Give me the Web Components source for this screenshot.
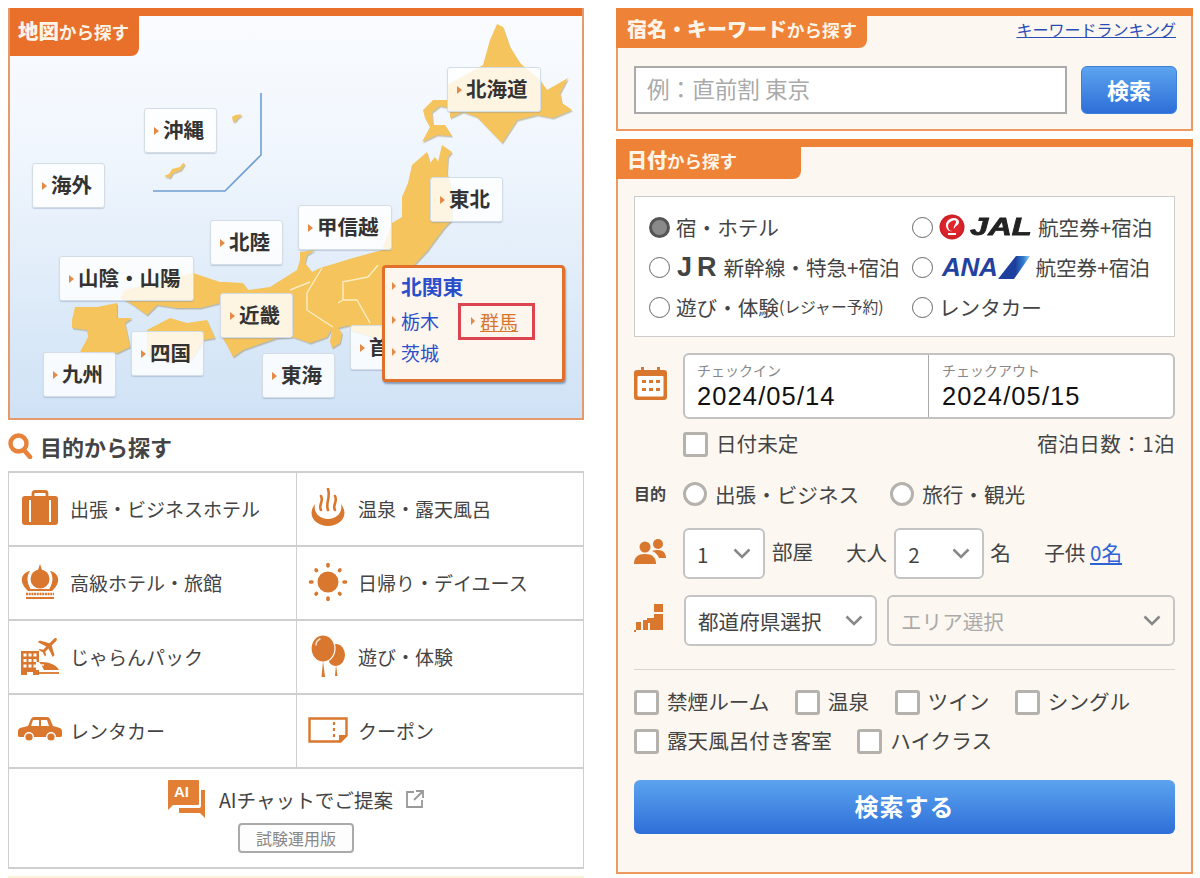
<!DOCTYPE html>
<html lang="ja"><head><meta charset="utf-8"><title>検索</title>
<style>
html,body{margin:0;padding:0;background:#fff;height:878px;overflow:hidden}
body{font-family:"Noto Sans CJK JP","Noto Sans",sans-serif;color:#444}
x-page{display:flex;gap:32px;padding:8px 7px 0 8px;align-items:flex-start}
svg{display:block}
</style></head><body>
<x-page>
  <x-left>
    <x-map>
      <x-map-label x="447" y="67">北海道</x-map-label>
      <x-map-label x="144" y="108">沖縄</x-map-label>
      <x-map-label x="32" y="163">海外</x-map-label>
      <x-map-label x="430" y="177">東北</x-map-label>
      <x-map-label x="298" y="205">甲信越</x-map-label>
      <x-map-label x="210" y="220">北陸</x-map-label>
      <x-map-label x="59" y="256">山陰・山陽</x-map-label>
      <x-map-label x="220" y="293">近畿</x-map-label>
      <x-map-label x="131" y="331">四国</x-map-label>
      <x-map-label x="350" y="325">首</x-map-label>
      <x-map-label x="43" y="352">九州</x-map-label>
      <x-map-label x="262" y="353">東海</x-map-label>
      <x-map-popup></x-map-popup>
    </x-map>
    <x-purpose-head>目的から探す</x-purpose-head>
    <x-purpose-grid>
      <x-purpose icon="case">出張・ビジネスホテル</x-purpose>
      <x-purpose icon="onsen">温泉・露天風呂</x-purpose>
      <x-purpose icon="crown">高級ホテル・旅館</x-purpose>
      <x-purpose icon="sun">日帰り・デイユース</x-purpose>
      <x-purpose icon="pack">じゃらんパック</x-purpose>
      <x-purpose icon="balloon">遊び・体験</x-purpose>
      <x-purpose icon="car">レンタカー</x-purpose>
      <x-purpose icon="coupon">クーポン</x-purpose>
      <x-ai-row></x-ai-row>
    </x-purpose-grid>
    <x-strip></x-strip>
  </x-left>
  <x-right>
    <x-panel main="宿名・キーワード" tabw="251" h="123" link="キーワードランキング"><x-keyword></x-keyword></x-panel>
    <x-panel main="日付" tabw="185" h="735"><x-date-form></x-date-form></x-panel>
  </x-right>
</x-page>

<script>
const OR='#d9772e';
const def=(n,html,extra)=>{customElements.define(n,class extends HTMLElement{
  constructor(){super();this.attachShadow({mode:'open'})}
  connectedCallback(){this.shadowRoot.innerHTML=typeof html==='function'?html(this):html;extra&&extra(this)}
})};

def('x-left',`<style>:host{display:block;width:576px;flex:none}</style><slot></slot>`);
def('x-right',`<style>:host{display:flex;flex-direction:column;gap:8px;width:577px;flex:none}</style><slot></slot>`);
def('x-strip',`<style>:host{display:block;height:4px;margin-top:7px;background:#fdf3da}</style>`);

def('x-map',`<style>
:host{display:block;position:relative;width:576px;height:412px;box-sizing:border-box;border:2px solid #e59a6c;border-top:0;background:linear-gradient(#fafcff,#f0f6fd 35%,#cfe2f5);overflow:hidden}
.bar{height:8px;margin:0 -2px;background:#e8702a}
.tab{position:absolute;left:-2px;top:0;width:131px;height:48px;background:#e8702a;border-radius:0 0 8px 0;box-sizing:border-box;padding:7px 0 0 10px;font-weight:700;font-size:17.5px;line-height:30px;white-space:nowrap;color:#fff4e8}
.tab b{font-size:20.5px}
svg.m{position:absolute;left:-2px;top:0}
</style>
<svg class="m" width="576" height="412" viewBox="8 8 576 412">
<defs><filter id="s" x="-5%" y="-5%" width="110%" height="110%"><feDropShadow dx="1" dy="1.5" stdDeviation=".6" flood-color="#8a7a50" flood-opacity=".45"/></filter></defs>
<path d="M261 93V155L225 191H153" fill="none" stroke="#6f9fd2" stroke-width="1.6"/>
<g fill="#f5c45c" filter="url(#s)">
<path d="M497 24L503 27 510 47 520 63 540 80 547 90 568 78 560 93 562 103 572 110 553 118 537 115 517 120 502 143 477 117 463 112 450 118 450 108 440 106 432 112 433 125 445 125 452 136 437 135 422 142 430 127 425 118 423 110 433 100 447 100 447 85 483 65 490 40Z"/>
<path d="M442 145L452 152 448 157 447 173 452 190 452 220 445 227 430 247 428 250 412 267 430 300 400 345 350 330 350 325 338 328 342 333 340 343 332 348 330 342 332 328 327 337 310 343 293 337 277 338 257 345 243 350 233 357 227 345 222 337 220 325 220 303 200 308 177 308 157 305 147 315 133 305 120 297 125 290 193 273 220 282 225 282 243 283 248 290 270 287 297 270 300 260 300 252 315 250 307 255 305 263 312 272 320 268 353 258 382 250 392 223 402 217 402 197 408 183 412 165 427 152 430 163 435 157 438 162Z"/>
<path d="M147 330L170 318 187 323 207 320 215 338 203 340 193 357 171 363 147 355Z"/>
<path d="M72 320L75 307 97 307 117 303 117 318 132 318 125 323 130 347 117 353 80 352 88 337 87 330 72 328Z"/>
<path d="M232 117c2-2 6-3 10-2l-4 3-2 3-3 1z"/>
<path d="M164 176l5-2 3-5 8-2 3-4 2 1-4 6-8 3-3 5z"/>
</g>
<g fill="none" stroke="#fdedc2" stroke-width="1.4">
<path d="M322 268L307 293 307 310 322 320 333 327M342 282L368 277 378 265M343 283L343 300 357 300 370 323M338 303L343 300M290 290L310 282"/>
</g>
</svg>
<div class="bar"></div>
<div class="tab"><b>地図</b>から探す</div>
<slot></slot>`);

def('x-map-label',t=>`<style>
:host{position:absolute;left:${+t.getAttribute('x')-10}px;top:${+t.getAttribute('y')-8}px;display:flex;align-items:center;height:45px;box-sizing:border-box;padding:0 12px 3px 9px;background:rgba(255,255,255,.82);border:1px solid #d4dde6;border-radius:3px;box-shadow:0 1px 1px rgba(120,140,170,.35);font-size:20.5px;font-weight:700;color:#333;white-space:nowrap}
i{width:0;height:0;border-left:5px solid #e58a45;border-top:4.5px solid transparent;border-bottom:4.5px solid transparent;margin:3px 4px 0 0}
</style><i></i><slot></slot>`);

def('x-map-popup',`<style>
:host{position:absolute;left:372px;top:257px;width:183px;height:117px;box-sizing:border-box;border:3px solid #e0702c;border-radius:4px;background:#fdf6ee;box-shadow:1px 2px 2px rgba(70,90,120,.55);padding:5px 0 0 7px;color:#2b4fcb;display:flex;flex-direction:column}
a{display:flex;align-items:center;color:inherit;text-decoration:none;white-space:nowrap}
i{width:0;height:0;border-left:4px solid #e58a45;border-top:4.5px solid transparent;border-bottom:4.5px solid transparent;margin-right:5px}
.h{font-size:20.8px;font-weight:700;height:26px}
.g{display:grid;grid-template-columns:66px 77px;grid-auto-rows:32px;align-items:center;font-size:19px;margin-top:5px}
.s{grid-row:1;grid-column:2;box-sizing:border-box;height:37px;border:3px solid #dc4450;padding-left:10px;color:#d9772e;margin-top:2px}
.s span{text-decoration:underline}
</style>
<a class="h"><i></i>北関東</a>
<div class="g"><a><i></i>栃木</a><a class="s"><i></i><span>群馬</span></a><a><i></i>茨城</a></div>`);

def('x-purpose-head',`<style>
:host{display:flex;align-items:center;height:51px;gap:7px;font-size:22px;font-weight:700;color:#444;padding-top:1px;box-sizing:border-box}
</style><svg width="25" height="26" viewBox="0 0 25 26"><circle cx="10.5" cy="10.5" r="8" fill="none" stroke="#e8823a" stroke-width="4.4"/><path d="M16 17l6 7" stroke="#e8823a" stroke-width="4.6" stroke-linecap="round"/></svg><slot></slot>`);

def('x-purpose-grid',`<style>
:host{display:grid;grid-template-columns:288px 287px;grid-template-rows:repeat(4,74px) 100px;box-sizing:border-box;width:576px;border-top:2px solid #cfcfcf;border-left:1px solid #cfcfcf}
</style><slot></slot>`);

const ICONS={
case:`<svg width="38" height="36" viewBox="0 0 38 36"><path d="M12 7V3.500q0-2 2-2h10q2 0 2 2V7" fill="none" stroke="${OR}" stroke-width="2.800"/><rect x="1" y="6" width="36" height="29" rx="3" fill="${OR}"/><path d="M9 10v22M29 10v22" stroke="#fff" stroke-width="2"/></svg>`,
onsen:`<svg width="38" height="40" viewBox="0 0 38 40"><path d="M12 22c-3-5 3-8 0-14M19 22c-3-7 3-12 0-21M26 22c-3-5 3-8 0-14" fill="none" stroke="${OR}" stroke-width="2.600" stroke-linecap="round"/><path d="M6 16C-3 28 7 38 19 38S41 28 32 16c2 9-5 15-13 15S4 25 6 16z" fill="${OR}"/></svg>`,
crown:`<svg width="38" height="36" viewBox="0 0 38 36"><path d="M19 0l2 6h-4z" fill="${OR}"/><circle cx="19" cy="15" r="9.500" fill="${OR}"/><path d="M9 7C3 8 0 13 1 18c1 4 4 7 6 9h4C6 20 5 13 9 7zM29 7c6 1 9 6 8 11-1 4-4 7-6 9h-4c5-7 6-14 2-20z" fill="${OR}"/><path d="M10 26h18" stroke="${OR}" stroke-width="2"/><path d="M5 30h28" stroke="${OR}" stroke-width="2.400" stroke-dasharray="2 .7"/><path d="M5 34h28" stroke="${OR}" stroke-width="2"/></svg>`,
sun:`<svg width="40" height="40" viewBox="0 0 40 40"><circle cx="20" cy="20" r="10.500" fill="${OR}"/><g stroke="${OR}" stroke-width="3.600" stroke-linecap="round"><path d="M20 2.500v1.500M20 36v1.500M2.500 20h1.500M36 20h1.500M8 8l.5.5M32 8l-.5.5M8 32l.5-.5M32 32l-.5-.5"/></g></svg>`,
pack:`<svg width="40" height="38" viewBox="0 0 40 38"><g transform="translate(28.500 9.500) rotate(45)"><path d="M-1.500-10q1.500-3 3 0V-3l9 5v2.500l-9-3V6l3 2v1.500l-4.500-1.300-4.500 1.300V8l3-2V1.500l-9 3V2l9-5z" fill="${OR}"/></g><path d="M1 14h18v24h-6v-3H7v3H1z" fill="${OR}"/><g fill="#fff"><rect x="3.500" y="16.500" width="3" height="3"/><rect x="8.500" y="16.500" width="3" height="3"/><rect x="13.500" y="16.500" width="3" height="3"/><rect x="3.500" y="22" width="3" height="3"/><rect x="8.500" y="22" width="3" height="3"/><rect x="13.500" y="22" width="3" height="3"/><rect x="3.500" y="27.500" width="3" height="3"/><rect x="8.500" y="27.500" width="3" height="3"/><rect x="13.500" y="27.500" width="3" height="3"/></g><path d="M16 25h6c7 0 15 3 17 8H16z" fill="#fff"/><path d="M19 25h3c7 0 15 3 17 8H24c-2-4-3-6-5-8z" fill="${OR}"/><path d="M21 28h3" stroke="#fff" stroke-width="1.400"/><path d="M17 36h22" stroke="${OR}" stroke-width="1.800"/></svg>`,
balloon:`<svg width="36" height="42" viewBox="0 0 36 42"><ellipse cx="26" cy="20" rx="9" ry="11" fill="${OR}"/><path d="M26 30l1.500 11h-2.500z" fill="${OR}"/><ellipse cx="13" cy="13.500" rx="12" ry="13.500" fill="${OR}" stroke="#fff" stroke-width="1.200"/><path d="M13 26l2 16h-3.500z" fill="${OR}"/><path d="M6 10c0-3 2-5 4-6" stroke="#fff" stroke-width="1.400" fill="none" stroke-linecap="round" opacity=".8"/></svg>`,
car:`<svg width="44" height="26" viewBox="0 0 44 26"><path d="M2 11l8-2 3-7q1-2 3-2h13q2 0 3 2l3 7 7 2q2 1 2 3v5q0 1-2 1H2q-2 0-2-1v-5q0-2 2-3z" fill="${OR}"/><path d="M15 3h6v6h-8zM23 3h6l2 6h-8z" fill="#fff"/><circle cx="11" cy="20" r="5" fill="#fff"/><circle cx="11" cy="20" r="3.600" fill="${OR}"/><circle cx="33" cy="20" r="5" fill="#fff"/><circle cx="33" cy="20" r="3.600" fill="${OR}"/></svg>`,
coupon:`<svg width="40" height="26" viewBox="0 0 40 26"><path d="M1.500 1.500h37v17l-6 6h-31z" fill="none" stroke="${OR}" stroke-width="2.400"/><path d="M26 5v3M26 11v3M26 17v3" stroke="${OR}" stroke-width="2.200"/><path d="M38 18h-7v7z" fill="${OR}"/></svg>`
};
def('x-purpose',t=>`<style>
:host{display:flex;align-items:center;box-sizing:border-box;border-right:1px solid #cfcfcf;border-bottom:2px solid #cfcfcf;font-size:19px;color:#444;white-space:nowrap;padding-bottom:2px}
.i{width:61px;display:flex;justify-content:center;flex:none;box-sizing:border-box}
</style><div class="i">${ICONS[t.getAttribute('icon')]}</div><slot></slot>`);

def('x-ai-row',`<style>
:host{grid-column:1/3;box-sizing:border-box;border-right:1px solid #cfcfcf;border-bottom:2px solid #cfcfcf;display:flex;flex-direction:column;align-items:center;padding-top:10px}
.r{display:flex;align-items:center;height:40px;font-size:19.600px;color:#444;white-space:nowrap}
.b{margin-top:4px;width:116px;height:30px;box-sizing:border-box;border:2px solid #aaa;border-radius:4px;font-size:16px;line-height:26px;text-align:center;color:#888;background:#fdfdfd}
.ai{margin-right:13px}.e{margin-left:12px}
.t{font:700 15px "Liberation Sans",sans-serif;fill:#fff}
</style>
<div class="r"><svg class="ai" width="39" height="38" viewBox="0 0 39 38"><path d="M1 23l0-22q0-1 1-1h29q1 0 1 1v23q0 1-1 1H6l-5 5z" fill="#e27f34"/><path d="M34 10h4v28l-5-5H13q-1 0-1-1v-4h20q2 0 2-2z" fill="#e27f34"/><text class="t" x="7" y="17">AI</text></svg><span>AIチャットでご提案</span><svg class="e" width="20" height="20" viewBox="0 0 20 20"><path d="M9 3H2v15h15v-7M11 2h7v7M18 2l-9 9" fill="none" stroke="#999" stroke-width="1.800"/></svg></div>
<div class="b">試験運用版</div>`);

def('x-panel',t=>`<style>
:host{display:block;position:relative;box-sizing:border-box;height:${t.getAttribute('h')}px;border:2px solid #ee9a5e;border-top:0;background:#fcf7f0}
.bar{height:8px;margin:0 -2px;background:#ee8237}
.tab{position:absolute;left:-2px;top:0;width:${t.getAttribute('tabw')}px;height:40px;background:#ee8237;border-radius:0 0 8px 0;box-sizing:border-box;padding:5px 0 0 11px;color:#fff4e8;font-weight:700;font-size:17.500px;line-height:32px;white-space:nowrap}
.tab b{font-size:20px}
.l{position:absolute;right:15px;top:10px;font-size:16px;line-height:22px;color:#2a4db5;text-decoration:underline;white-space:nowrap}
</style><div class="bar"></div><div class="tab"><b>${t.getAttribute('main')}</b>から探す</div>${t.getAttribute('link')?`<a class="l">${t.getAttribute('link')}</a>`:''}<slot></slot>`);

def('x-keyword',`<style>
:host{display:flex;gap:14px;padding:50px 14px 0 16px}
.i{width:433px;height:48px;box-sizing:border-box;border:2px solid #aaa;background:#fff;padding-left:11px;font-size:22.600px;line-height:42px;color:#aaa;white-space:nowrap}
.b{width:96px;height:48px;border-radius:6px;background:linear-gradient(#5ca4ef,#2e6ed8);border:1px solid #3f7fdc;box-sizing:border-box;color:#fff;font-weight:700;font-size:22px;line-height:44px;text-align:center}
</style><div class="i">例：直前割 東京</div><div class="b">検索</div>`);

def('x-radio',t=>`<style>
:host{display:inline-flex;align-items:center;white-space:nowrap;font-size:20.600px;color:#444;line-height:28px}
i{flex:none;display:block;box-sizing:border-box;width:var(--rs,21px);height:var(--rs,21px);border-radius:50%;margin-right:var(--rg,6px);${t.hasAttribute('checked')?'background:#8a8a8a;border:3px solid #555;':'background:#fff;border:var(--rb,1.500px solid #666);'}}
</style><i></i><slot></slot>`);
def('x-check',`<style>
:host{display:inline-flex;align-items:center;white-space:nowrap;font-size:20.600px;color:#444;line-height:28px}
i{flex:none;display:block;box-sizing:border-box;width:25px;height:25px;border:3px solid #b5b2ae;border-radius:3px;background:#fff;margin:1px 8px -1px 0}
</style><i></i><slot></slot>`);
def('x-select',t=>`<style>
:host{display:flex;align-items:center;justify-content:space-between;box-sizing:border-box;height:51px;border:2px solid #c4c4c4;border-radius:6px;background:${t.hasAttribute('off')?'transparent':'#fff'};color:${t.hasAttribute('off')?'#aaa':'#444'};font-size:20.600px;padding:0 12px 0 12px;white-space:nowrap}
</style><slot></slot><svg width="18" height="11" viewBox="0 0 18 11"><path d="M1.500 1.500L9 9l7.500-7.500" fill="none" stroke="#888" stroke-width="2.600"/></svg>`);

def('x-date-form',`<style>
:host{display:flex;flex-direction:column;padding:49px 16px 0 16px;color:#444;font-size:20.600px}
.types{box-sizing:border-box;height:141px;background:#fff;border:1px solid #ccc;padding:10px 0 0 14px;display:grid;grid-template-columns:263px 1fr;grid-auto-rows:40px;align-items:center}
.rl{display:inline-flex;align-items:center}
.jr{font:700 27px "Liberation Sans",sans-serif;color:#444;letter-spacing:5px;margin:0 2px 0 1px}
.jal{display:inline-block;width:62px;margin:0 6px 0 5px;font:italic 700 24px "Liberation Sans",sans-serif;color:#222;transform:scaleX(1.36);transform-origin:left center;-webkit-text-stroke:.8px #222}
.ana{font:italic 700 26px "Liberation Sans",sans-serif;color:#23429f;letter-spacing:-.3px;margin-left:3px}
small{font-size:15.800px}
.date{display:flex;height:66px;box-sizing:border-box;border:2px solid #c2c2c2;border-radius:6px;background:#fff}
.date>div{flex:1;padding:5px 0 0 12px;min-width:0;box-sizing:border-box}
.date>div+div{border-left:1px solid #aaa;flex:0 0 245px;padding-left:13px}
.date span{display:block;font-size:14px;line-height:20px;color:#888}
.date b{display:block;font:400 25.500px/33px "Liberation Sans",sans-serif;color:#111;letter-spacing:1.100px}
.row{display:flex;align-items:center}
.ic{width:49px;flex:none}
.mt{font-size:16px;font-weight:700;width:49px;flex:none;color:#444;padding-bottom:2px}
.s1{margin-top:9px;justify-content:space-between}
.s2{margin-top:22px;--rs:24px;--rb:3px solid #b5b2ae;--rg:8px}
.s3{margin-top:20px}
.s3 span{padding-bottom:3px}
.s4{margin-top:16px;gap:10px}
hr{border:0;height:1px;background:#d9d5cf;margin:23px 0 17px;width:100%}
.ch{display:flex;flex-wrap:wrap;column-gap:25.500px;row-gap:11px}
.go{margin-top:26px;height:54px;border-radius:6px;background:linear-gradient(#5ca4ef,#2e6ed8);color:#fff;font-size:24px;font-weight:700;line-height:52px;text-align:center;letter-spacing:1px}
a{color:#2e63d6;text-decoration:underline}
</style>
<div class="types">
  <x-radio checked>宿・ホテル</x-radio>
  <x-radio><span class="rl"><svg width="26" height="26" viewBox="0 0 26 26"><defs><radialGradient id="r"><stop offset=".6" stop-color="#e0262c"/><stop offset="1" stop-color="#c81e24"/></radialGradient></defs><circle cx="13" cy="13" r="12.500" fill="url(#r)"/><path d="M7 11c0-4 4-7 8-7 3 0 5 2 5 4 0 3-4 4-5 7-1-3 2-5 2-7 0-2-2-2-4-1-3 1-4 3-4 5 0 3 2 5 4 5-3 1-6-2-6-6z" fill="#fff"/><rect x="9" y="19" width="8" height="2" fill="#fff"/></svg><span class="jal">JAL</span>航空券+宿泊</span></x-radio>
  <x-radio><span class="rl"><span class="jr">JR</span>新幹線・特急+宿泊</span></x-radio>
  <x-radio><span class="rl"><span class="ana">ANA</span><svg width="32" height="23" viewBox="0 0 32 23" style="margin-left:1px"><defs><linearGradient id="a" x1="0" x2="1"><stop offset=".55" stop-color="#1f3f9e"/><stop offset=".8" stop-color="#2f7fd0"/><stop offset="1" stop-color="#9fd0f0"/></linearGradient></defs><path d="M18 0h14L16 23H0z" fill="url(#a)"/></svg><span style="margin-left:5px">航空券+宿泊</span></span></x-radio>
  <x-radio>遊び・体験<small>(レジャー予約)</small></x-radio>
  <x-radio>レンタカー</x-radio>
</div>
<div class="row" style="margin-top:16px">
  <div class="ic"><svg width="33" height="34" viewBox="0 0 33 34"><path d="M3 4h27q3 0 3 3v24q0 3-3 3H3q-3 0-3-3V7q0-3 3-3z" fill="${OR}"/><rect x="7" y="1" width="3" height="7" fill="${OR}"/><rect x="23" y="1" width="3" height="7" fill="${OR}"/><rect x="3.500" y="10" width="26" height="20.500" rx="1" fill="#fff"/><g fill="${OR}"><rect x="8" y="14" width="4" height="3"/><rect x="15" y="14" width="4" height="3"/><rect x="22" y="14" width="4" height="3"/><rect x="8" y="22" width="4" height="3"/><rect x="15" y="22" width="4" height="3"/><rect x="22" y="22" width="4" height="3"/></g></svg></div>
  <div class="date" style="flex:1"><div><span>チェックイン</span><b>2024/05/14</b></div><div><span>チェックアウト</span><b>2024/05/15</b></div></div>
</div>
<div class="row s1" style="padding-left:49px"><x-check>日付未定</x-check><span style="letter-spacing:.4px">宿泊日数：1泊</span></div>
<div class="row s2"><span class="mt">目的</span><x-radio>出張・ビジネス</x-radio><x-radio style="margin-left:31px">旅行・観光</x-radio></div>
<div class="row s3">
  <div class="ic"><svg width="32" height="26" viewBox="0 0 32 26"><circle cx="11" cy="9" r="5.500" fill="${OR}"/><path d="M0 26c0-7 4-10 11-10s11 3 11 10z" fill="${OR}"/><circle cx="24" cy="6" r="5" fill="${OR}"/><path d="M18 13c2-1 4-1 6-1 5 0 8 3 8 8h-7c-1-3-4-6-7-7z" fill="${OR}"/></svg></div>
  <x-select style="width:82px">1</x-select><span style="margin:-3px 0 0 7px;width:74px">部屋</span>
  <span>大人</span><x-select style="width:90px;margin-left:7px">2</x-select><span style="margin-left:6px;width:54px">名</span>
  <span>子供 <a>0名</a></span>
</div>
<div class="row s4">
  <div style="width:39px;flex:none;margin-right:1px"><svg width="31" height="28" viewBox="0 0 31 28"><g fill="${OR}"><rect x="20" y="0" width="9" height="8"/><path d="M20 10h9v16H16v-7h-3v-5h7z"/><rect x="9" y="16" width="5" height="10"/><rect x="2" y="18" width="5" height="8"/><rect x="0" y="26" width="2" height="2"/></g></svg></div>
  <x-select style="width:193px">都道府県選択</x-select><x-select off style="flex:1">エリア選択</x-select>
</div>
<hr>
<div class="ch"><x-check>禁煙ルーム</x-check><x-check>温泉</x-check><x-check>ツイン</x-check><x-check>シングル</x-check><x-check>露天風呂付き客室</x-check><x-check>ハイクラス</x-check></div>
<div class="go">検索する</div>`);

def('x-page',`<slot></slot>`);
</script>
</body></html>
